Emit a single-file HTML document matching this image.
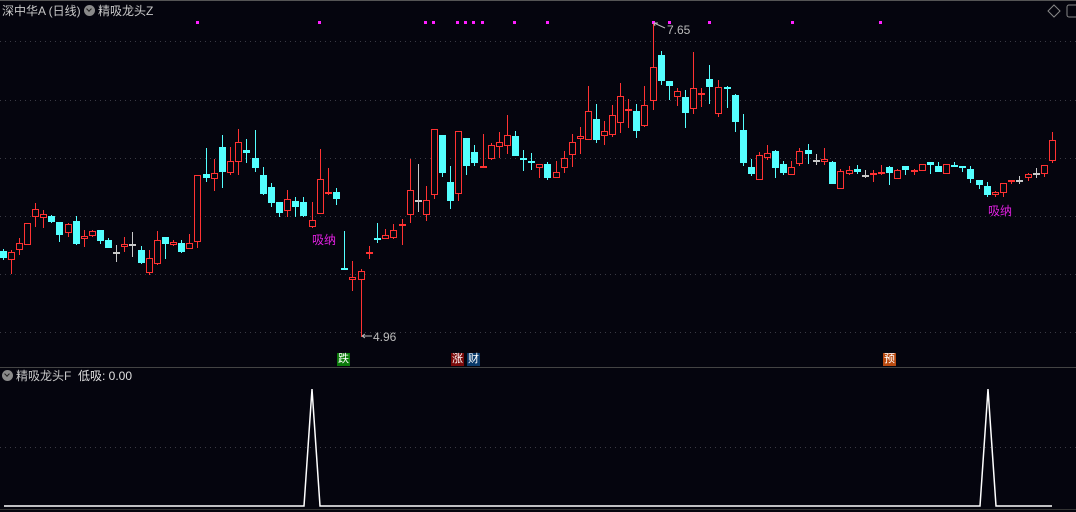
<!DOCTYPE html>
<html><head><meta charset="utf-8"><style>
html,body{margin:0;padding:0;background:#05050e;}
body{width:1076px;height:512px;overflow:hidden;position:relative;font-family:"Liberation Sans","Noto Sans CJK SC",sans-serif;}
.t{position:absolute;font-size:12px;color:#c8c8c8;white-space:nowrap;line-height:14px;}
.circ{display:inline-block;width:11px;height:11px;border-radius:50%;background:#8a8a8a;vertical-align:-1px;position:relative;margin-right:3px}
.circ:after{content:"";position:absolute;left:3px;top:2px;width:3px;height:3px;border-right:1.5px solid #222;border-bottom:1.5px solid #222;transform:rotate(45deg)}
.tag{position:absolute;font-size:11px;color:#fff;width:13px;height:13px;line-height:13px;text-align:center}
</style></head><body>
<svg width="1076" height="512" style="position:absolute;left:0;top:0" id="s">
<line x1="0" y1="0.5" x2="1076" y2="0.5" stroke="#555" />
<g stroke="#3a3a44" stroke-dasharray="1,4">
<line x1="0" y1="41.5" x2="1076" y2="41.5"/><line x1="0" y1="100.5" x2="1076" y2="100.5"/>
<line x1="0" y1="158.5" x2="1076" y2="158.5"/><line x1="0" y1="216.5" x2="1076" y2="216.5"/>
<line x1="0" y1="274.5" x2="1076" y2="274.5"/><line x1="0" y1="332.5" x2="1076" y2="332.5"/>
<line x1="0" y1="447.5" x2="1076" y2="447.5"/>
</g>
<line x1="0" y1="367.5" x2="1076" y2="367.5" stroke="#444"/>
<line x1="0" y1="509.5" x2="1076" y2="509.5" stroke="#333"/>
<path d="M1054 5 L1060 11 L1054 17 L1048 11 Z" fill="none" stroke="#888"/>
<rect x="1067" y="5" width="12" height="12" rx="2" fill="none" stroke="#888"/>
<polyline points="4,506 304,506 312,389 320,506 980,506 988,389 996,506 1052,506" fill="none" stroke="#fff" stroke-width="1.5"/>
<g id="c"></g>
<text x="373" y="341" font-size="12" fill="#bbb" font-family="Liberation Sans">4.96</text>
<path d="M362 336 H372 M362 336 l3 -2 M362 336 l3 2" stroke="#bbb" fill="none"/>
<text x="667" y="34" font-size="12" fill="#bbb" font-family="Liberation Sans">7.65</text>
<path d="M654 23 L665 28 M654 23 l4 0 M654 23 l1 3" stroke="#bbb" fill="none"/>
</svg>
<div class="t" style="left:2px;top:4px">深中华A (日线) <span class="circ"></span>精吸龙头Z</div>
<div class="t" style="left:2px;top:369px"><span class="circ"></span>精吸龙头F &nbsp;<span style="color:#e0e0e0">低吸: 0.00</span></div>
<div class="t" style="left:312px;top:233px;color:#e020e0">吸纳</div>
<div class="t" style="left:988px;top:204px;color:#e020e0">吸纳</div>
<div class="tag" style="left:337px;top:353px;background:#0a7a0a">跌</div>
<div class="tag" style="left:451px;top:353px;background:#7a0a0a">涨</div>
<div class="tag" style="left:467px;top:353px;background:#0a3a6a">财</div>
<div class="tag" style="left:883px;top:353px;background:#b84a10">预</div>
<script>
var d=[[3,'c',251,258,249,260],[11,'r',252,260,250,274],[19,'r',243,250,238,255],[27,'r',223,245,223,245],[35,'r',209,217,203,227],[43,'r',214,218,210,228],[51,'c',216,222,215,223],[59,'c',222,235,222,242],[68,'r',224,233,223,237],[76,'c',221,244,216,245],[84,'r',236,239,230,247],[92,'r',231,236,230,237],[100,'c',230,241,230,244],[108,'c',240,248,238,248],[116,'w',252,252,245,262],[124,'r',244,247,237,252],[132,'w',244,244,232,257],[141,'c',250,263,246,264],[149,'r',258,273,250,275],[157,'r',240,264,231,265],[165,'c',237,244,237,259],[173,'r',242,245,240,246],[181,'c',243,252,240,253],[189,'r',243,249,234,249],[197,'r',175,242,175,248],[206,'c',174,178,148,182],[214,'r',173,179,159,191],[222,'c',147,172,135,188],[230,'r',161,173,147,175],[238,'r',142,162,129,175],[246,'c',150,153,139,163],[255,'c',158,168,130,172],[263,'c',175,194,167,195],[271,'c',187,203,183,207],[279,'c',202,213,202,217],[287,'r',199,211,190,217],[295,'c',201,207,197,217],[303,'c',202,216,197,217],[312,'r',220,227,202,228],[320,'r',179,214,149,214],[328,'r',192,194,168,195],[336,'c',192,199,188,205],
[344,'c',268,270,231,270],[352,'r',277,280,261,291],[361,'r',271,280,269,337],[369,'r',252,253,246,259],[377,'c',238,238,223,243],[385,'r',235,239,229,239],[393,'r',230,238,224,239],[402,'r',224,226,219,245],[410,'r',190,215,159,223],[418,'w',200,200,164,212],[426,'r',200,215,186,221],[434,'r',129,195,129,199],[442,'c',135,173,135,177],[450,'c',182,201,166,209],[458,'r',131,194,131,201],[466,'c',138,166,138,175],[474,'c',152,163,145,166],[483,'r',166,167,134,168],[491,'r',145,159,143,160],[499,'r',142,147,132,158],[507,'r',135,146,115,154],[515,'c',136,156,131,156],[523,'c',158,160,150,171],[531,'c',161,163,153,170],[539,'r',164,168,164,178],[547,'c',164,178,162,180],[556,'r',172,178,161,178],[564,'r',158,168,151,173],[572,'r',142,155,134,167],[580,'r',136,139,127,154],[588,'r',111,140,86,140],[596,'c',119,140,104,143],[604,'r',131,136,121,145],[612,'r',115,135,105,137],[620,'r',96,123,83,133],[628,'r',109,110,99,128],[636,'c',111,131,104,138],[644,'r',105,126,86,127],[653,'r',67,101,22,110],[661,'c',55,81,51,85],[669,'c',81,86,81,100],[677,'r',91,97,88,106],[685,'c',97,113,90,128],[693,'r',88,109,52,114],[701,'r',93,95,88,107],[709,'c',79,87,65,104],
[718,'r',87,114,80,117],[727,'c',87,89,86,108],[735,'c',95,122,94,132],[743,'c',130,163,114,166],[751,'c',167,174,159,176],[759,'r',155,180,152,180],[767,'r',153,158,145,160],[775,'c',151,168,150,178],[783,'c',164,173,161,175],[791,'r',167,175,161,175],[799,'r',151,164,148,166],[808,'c',150,154,144,164],[816,'w',160,160,154,165],[824,'r',159,162,148,165],[832,'c',162,184,161,184],[840,'r',171,189,169,189],[849,'r',170,174,166,175],[857,'c',169,172,165,174],[865,'w',175,175,170,178],[873,'r',173,174,170,182],[881,'r',172,173,165,175],[889,'c',167,173,166,185],[897,'r',170,179,169,179],[905,'c',166,170,166,175],[914,'r',170,171,169,175],[922,'r',164,171,164,171],[930,'c',162,165,162,174],[938,'c',166,172,162,172],[946,'r',164,174,164,174],[954,'c',165,165,162,167],[962,'c',166,168,166,172],[970,'c',169,179,166,183],[979,'c',180,185,180,189],[987,'c',186,195,182,197],[995,'r',192,195,191,197],[1003,'r',183,193,183,197],[1011,'r',180,181,180,184],[1019,'w',180,180,176,184],[1028,'r',174,178,173,181],[1036,'w',173,173,168,178],[1044,'r',165,174,165,177],[1052,'r',140,161,132,163]];
var s='',col={r:'#ff3232',c:'#54ffff',w:'#c8c8c8'};
d.forEach(function(a){var x=a[0],k=col[a[1]],t=a[2],b=a[3],h=a[4],l=a[5];
s+='<line x1="'+(x+.5)+'" y1="'+h+'" x2="'+(x+.5)+'" y2="'+l+'" stroke="'+k+'"/>';
if(b-t<2){s+='<rect x="'+(x-3)+'" y="'+t+'" width="7" height="2" fill="'+k+'"/>';}
else if(a[1]=='r'){s+='<rect x="'+(x-2.5)+'" y="'+(t+.5)+'" width="6" height="'+(b-t-1)+'" fill="#05050e" stroke="'+k+'"/>';}
else{s+='<rect x="'+(x-3)+'" y="'+t+'" width="7" height="'+(b-t)+'" fill="'+k+'"/>';}});
[197,319,425,433,457,465,473,482,514,547,653,669,709,792,880].forEach(function(x){s+='<rect x="'+(x-1)+'" y="21" width="3" height="3" fill="#ff20ff"/>';});
document.getElementById('c').innerHTML=s;
</script>
</body></html>
